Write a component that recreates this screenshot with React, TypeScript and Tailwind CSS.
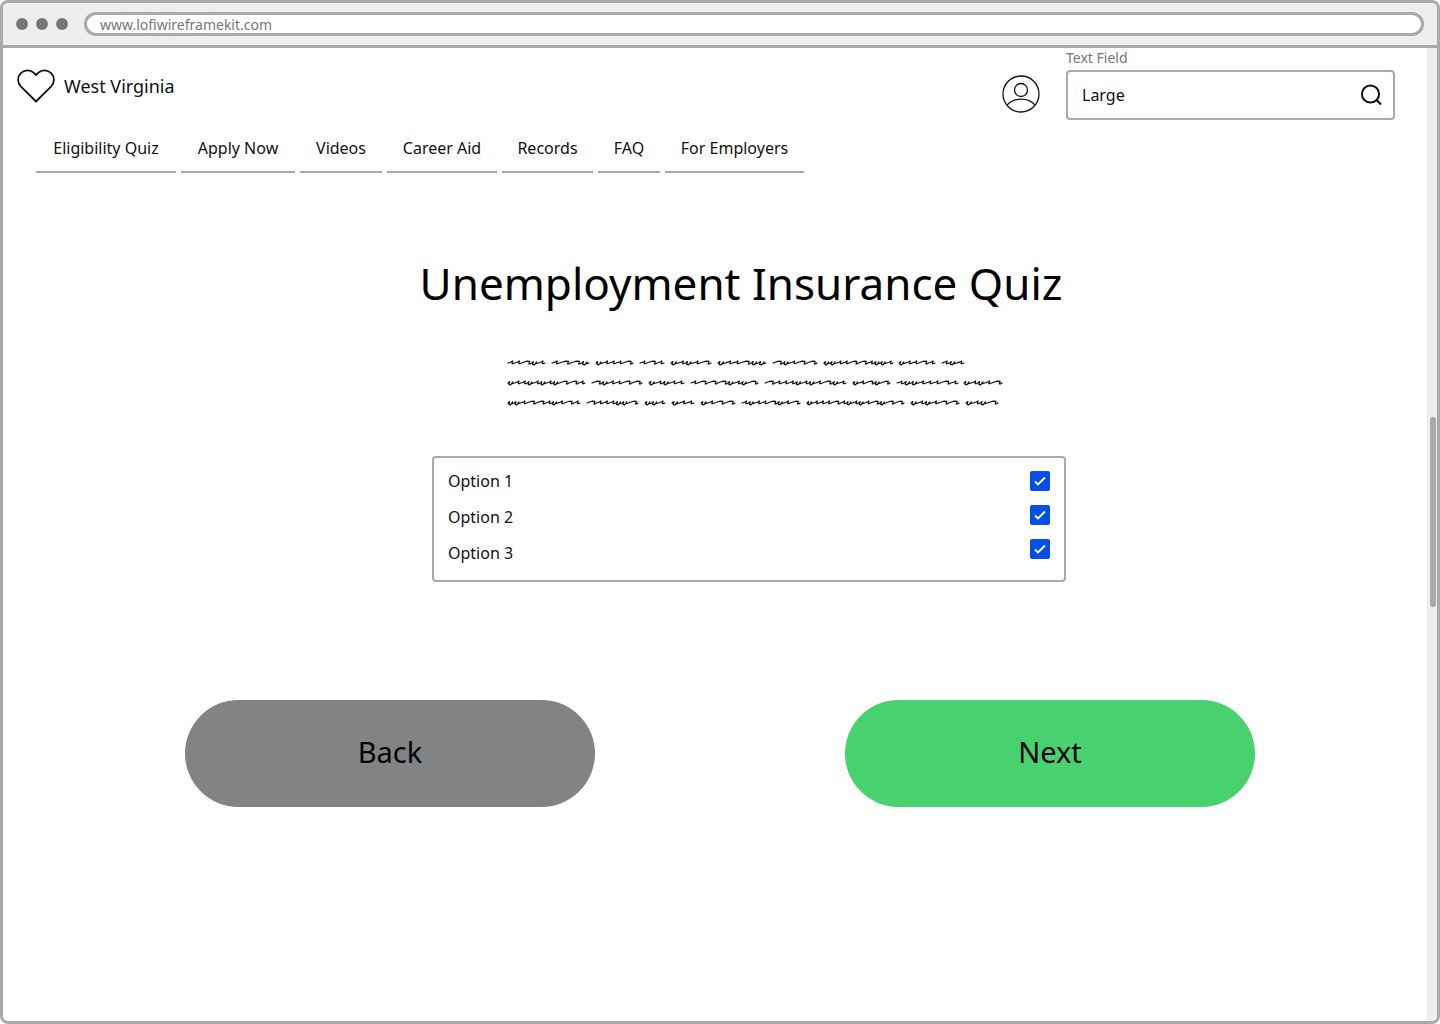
import { useState } from "react";

const tabs = [
  { label: "Eligibility Quiz", width: "w-[140px]" },
  { label: "Apply Now", width: "w-[114px]" },
  { label: "Videos", width: "w-[82px]" },
  { label: "Career Aid", width: "w-[110px]" },
  { label: "Records", width: "w-[91px]" },
  { label: "FAQ", width: "w-[62px]" },
  { label: "For Employers", width: "w-[139px]" },
];

const options = ["Option 1", "Option 2", "Option 3"];

// Each scribbled word: start, width, and its sequence of pen strokes
// (n = narrow hump, w = wide hump, u = low dip).
type Word = [number, number, string];

const scribbles: Word[][] = [
  [
    [0, 37, "nnwun"], [44, 37, "nwwu"], [88, 37, "unnnw"], [132, 24, "nwn"],
    [163, 40, "ununw"], [210, 48, "unnwuu"], [265, 44, "wunww"],
    [316, 69, "uunnwwnuun"], [391, 36, "unnwn"], [434, 22, "nun"],
  ],
  [
    [0, 77, "unnununuwwn"], [84, 50, "wunnww"], [141, 35, "ununn"],
    [183, 67, "nwwwunuw"], [257, 81, "wnnnununwun"], [345, 37, "unwuw"],
    [389, 61, "nuunnnwn"], [456, 38, "ununw"],
  ],
  [
    [0, 72, "uunwwnunwn"], [79, 51, "wnnnuuw"], [137, 20, "uun"],
    [164, 22, "unn"], [193, 34, "unww"], [234, 58, "nunnwunw"],
    [299, 97, "unnnwnununwuww"], [403, 48, "ununww"], [458, 32, "unuw"],
  ],
];

const strokes: Record<string, { advance: number; points: number[][] }> = {
  n: { advance: 6, points: [[2.2, -0.8], [4.2, -2], [3.6, 0.6], [4.4, 0.7], [6, 0]] },
  w: { advance: 9, points: [[2.5, -1], [5, -1.8], [7.4, -1.6], [6.6, 1], [7.6, 1], [9, 0]] },
  u: { advance: 6, points: [[1.6, -1.4], [0.9, 1.4], [2.4, 1.8], [4.4, -1], [3.8, 0.8], [6, 0]] },
};

function wordPath([start, width, pattern]: Word, baseline: number) {
  const total = pattern.split("").reduce((sum, key) => sum + strokes[key].advance, 0);
  const scale = width / total;
  let x = 0;
  let path = `M${start} ${baseline}`;
  for (const key of pattern) {
    for (const [dx, dy] of strokes[key].points) {
      path += `L${(start + (x + dx) * scale).toFixed(2)} ${(baseline + dy).toFixed(2)}`;
    }
    x += strokes[key].advance;
  }
  return path;
}

function Scribble() {
  return (
    <svg width="494" height="52" viewBox="0 0 494 52" fill="none" role="img" aria-label="Placeholder paragraph" className="overflow-visible">
      {scribbles.map((line, row) =>
        line.map((word) => (
          <path
            key={`${row}-${word[0]}`}
            d={wordPath(word, 6 + row * 20)}
            stroke="#111"
            strokeWidth="1.2"
            strokeLinecap="round"
            strokeLinejoin="round"
          />
        )),
      )}
    </svg>
  );
}

function HeartIcon() {
  return (
    <svg width="38" height="34" viewBox="0 0 38 34" fill="none" stroke="#111" strokeWidth="1.8" strokeLinejoin="round" aria-hidden="true">
      <path d="M19 32.5 L4 17.7 C0.2 14 0.2 8 3.6 4.4 C7.3 0.4 13.3 0.5 16.6 3.6 L19 6 L21.4 3.6 C24.7 0.5 30.7 0.4 34.4 4.4 C37.8 8 37.8 14 34 17.7 Z" />
    </svg>
  );
}

function ProfileIcon() {
  return (
    <svg width="38" height="38" viewBox="0 0 38 38" fill="none" stroke="#111" strokeWidth="1.3" aria-hidden="true">
      <circle cx="19" cy="19" r="18" />
      <circle cx="19" cy="15" r="6.5" />
      <path d="M5 30.2 C8 26.3 13 24.2 19 24.2 C25 24.2 30 26.3 33 30.2" />
    </svg>
  );
}

function OptionCheckbox({ id }: { id: string }) {
  const [checked, setChecked] = useState(true);
  return (
    <span className="grid size-5">
      <input
        id={id}
        type="checkbox"
        checked={checked}
        onChange={(event) => setChecked(event.target.checked)}
        className="col-start-1 row-start-1 size-5 appearance-none rounded-xs border border-[#064fe6] bg-white checked:bg-[#064fe6]"
      />
      <svg viewBox="0 0 20 20" fill="none" aria-hidden="true" className="pointer-events-none col-start-1 row-start-1 size-5">
        <path d="M5 10.5 L8 13.5 L15 6.5" stroke="white" strokeWidth="1.9" />
      </svg>
    </span>
  );
}

export default function App() {
  return (
    <div className="min-h-screen bg-white font-['Noto_Sans',sans-serif] text-[#111]">
      <div className="flex min-h-screen flex-col overflow-hidden rounded-lg border-3 border-[#a9a9a9]">
        <div className="flex items-center border-b-3 border-[#a9a9a9] bg-[#eee] px-[13px] py-[9px]">
          <div className="mr-4 flex gap-2">
            <span className="size-3 rounded-full bg-[#777]" />
            <span className="size-3 rounded-full bg-[#777]" />
            <span className="size-3 rounded-full bg-[#777]" />
          </div>
          <input
            aria-label="Address"
            defaultValue="www.lofiwireframekit.com"
            className="h-6 min-w-0 flex-1 rounded-full border-3 border-[#a9a9a9] bg-white px-[13px] text-sm leading-4 text-[#777] outline-none"
          />
        </div>

        <div className="flex flex-1">
          <main className="min-w-0 flex-1">
            <header className="flex items-start justify-between pr-8 pl-[14px]">
              <a href="#" className="mt-[21px] flex items-center gap-[9px] text-lg">
                <HeartIcon />
                West Virginia
              </a>
              <div className="flex items-end gap-[26px]">
                <button type="button" aria-label="Profile" className="mb-[7px]">
                  <ProfileIcon />
                </button>
                <div className="flex w-[329px] flex-col">
                  <label htmlFor="search" className="h-[22px] text-sm text-[#777]">
                    Text Field
                  </label>
                  <div className="flex h-[50px] items-center rounded-sm border-2 border-[#a9a9a9] pr-[11px] pl-[14px]">
                    <input id="search" defaultValue="Large" className="min-w-0 flex-1 text-base outline-none" />
                    <svg width="22" height="22" viewBox="0 0 22 22" fill="none" stroke="#111" strokeWidth="2" aria-hidden="true">
                      <circle cx="10.5" cy="10" r="8.6" />
                      <path d="M16 15.5 L21 20.5" />
                    </svg>
                  </div>
                </div>
              </div>
            </header>

            <nav className="mt-[5px] flex gap-[5px] pl-[33px]">
              {tabs.map((tab) => (
                <a
                  key={tab.label}
                  href="#"
                  className={`${tab.width} h-12 border-b-2 border-[#a9a9a9] text-center text-base leading-[46px] whitespace-nowrap`}
                >
                  {tab.label}
                </a>
              ))}
            </nav>

            <h1 className="mt-[82px] pl-[52px] text-center text-[44px] leading-[56px] text-black">
              Unemployment Insurance Quiz
            </h1>

            <div className="mt-[46px] flex justify-center pl-20">
              <Scribble />
            </div>

            <div className="mt-[47px] flex justify-center pl-[68px]">
              <fieldset className="flex h-[126px] w-[634px] justify-between rounded-sm border-2 border-[#a9a9a9] px-[14px]">
                <div className="flex flex-col pt-[5px]">
                  {options.map((option, index) => (
                    <label key={option} htmlFor={`option-${index}`} className="text-base leading-9">
                      {option}
                    </label>
                  ))}
                </div>
                <div className="flex flex-col gap-[14px] pt-[13px]">
                  {options.map((option, index) => (
                    <OptionCheckbox key={option} id={`option-${index}`} />
                  ))}
                </div>
              </fieldset>
            </div>

            <div className="mt-[118px] flex justify-center gap-[250px] pl-[10px] text-[29px] text-black">
              <button type="button" className="h-[107px] w-[410px] rounded-full bg-[#828385] pb-[3px]">
                Back
              </button>
              <button type="button" className="h-[107px] w-[410px] rounded-full bg-[#48d26f] pb-[3px]">
                Next
              </button>
            </div>
          </main>

          <div className="flex w-[10px] items-center justify-end bg-[#eee] pr-px">
            <div className="mb-[45px] h-[190px] w-[6px] rounded-full bg-[#a9a9a9]" />
          </div>
        </div>
      </div>
    </div>
  );
}
